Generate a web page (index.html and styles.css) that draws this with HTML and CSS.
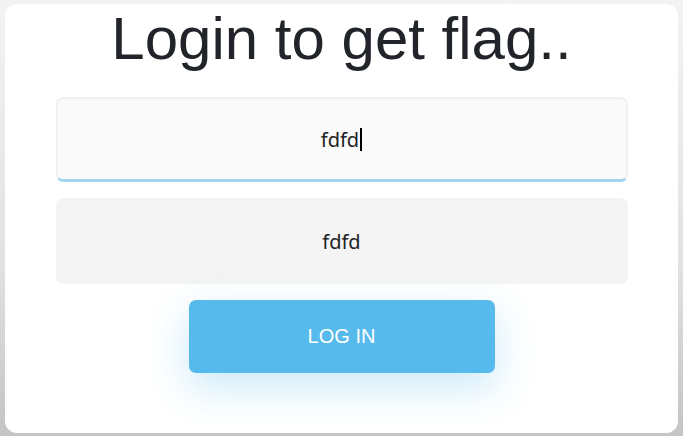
FILE: index.html
```html
<!DOCTYPE html>
<html>
<head>
<meta charset="utf-8">
<link rel="stylesheet" href="styles.css">
</head>
<body>
<main class="card">
  <h1 class="title">Login to get flag..</h1>
  <form class="form">
    <div class="field field-active"><span class="value">fdfd</span><span class="caret"></span></div>
    <div class="field field-plain"><span class="value">fdfd</span></div>
    <button type="button" class="btn">LOG IN</button>
  </form>
</main>
</body>
</html>
```
FILE: styles.css
```css
html, body {
  margin: 0;
  height: 100%;
}
body {
  background: linear-gradient(#f3f3f3 0%, #e2e2e2 60%, #c4c4c4 100%);
  padding: 4px 5px 3px 5px;
  box-sizing: border-box;
  font-family: "Liberation Sans", Arial, sans-serif;
}
.card {
  background: #fff;
  border-radius: 12px;
  height: 429px;
  box-sizing: border-box;
  padding-top: 5px;
  display: flex;
  flex-direction: column;
  align-items: center;
}
.title {
  margin: 0;
  font-weight: 400;
  font-size: 60px;
  line-height: 60px;
  color: #212529;
}
.form {
  margin-top: 28px;
  display: flex;
  flex-direction: column;
  align-items: center;
  gap: 16px;
}
.field {
  width: 572px;
  box-sizing: border-box;
  border-radius: 7px;
  display: flex;
  align-items: center;
  justify-content: center;
  font-family: "Noto Sans", "Open Sans", sans-serif;
  font-size: 20px;
  color: #222;
}
.field-active {
  height: 85px;
  background: #fafafa;
  border: 2px solid #f1f1f1;
  border-bottom: 3px solid #a2d5ee;
  padding-top: 1px;
}
.field-plain {
  height: 86px;
  background: #f4f4f4;
}
.caret {
  width: 2px;
  height: 23px;
  background: #000;
  margin-left: 1px;
}
.btn {
  width: 306px;
  height: 73px;
  border: none;
  border-radius: 7px;
  background: #57baec;
  color: #fff;
  font-family: "Liberation Sans", Arial, sans-serif;
  font-size: 20px;
  box-shadow: 0 14px 40px rgba(87, 186, 236, 0.32);
  padding: 0;
}
```
